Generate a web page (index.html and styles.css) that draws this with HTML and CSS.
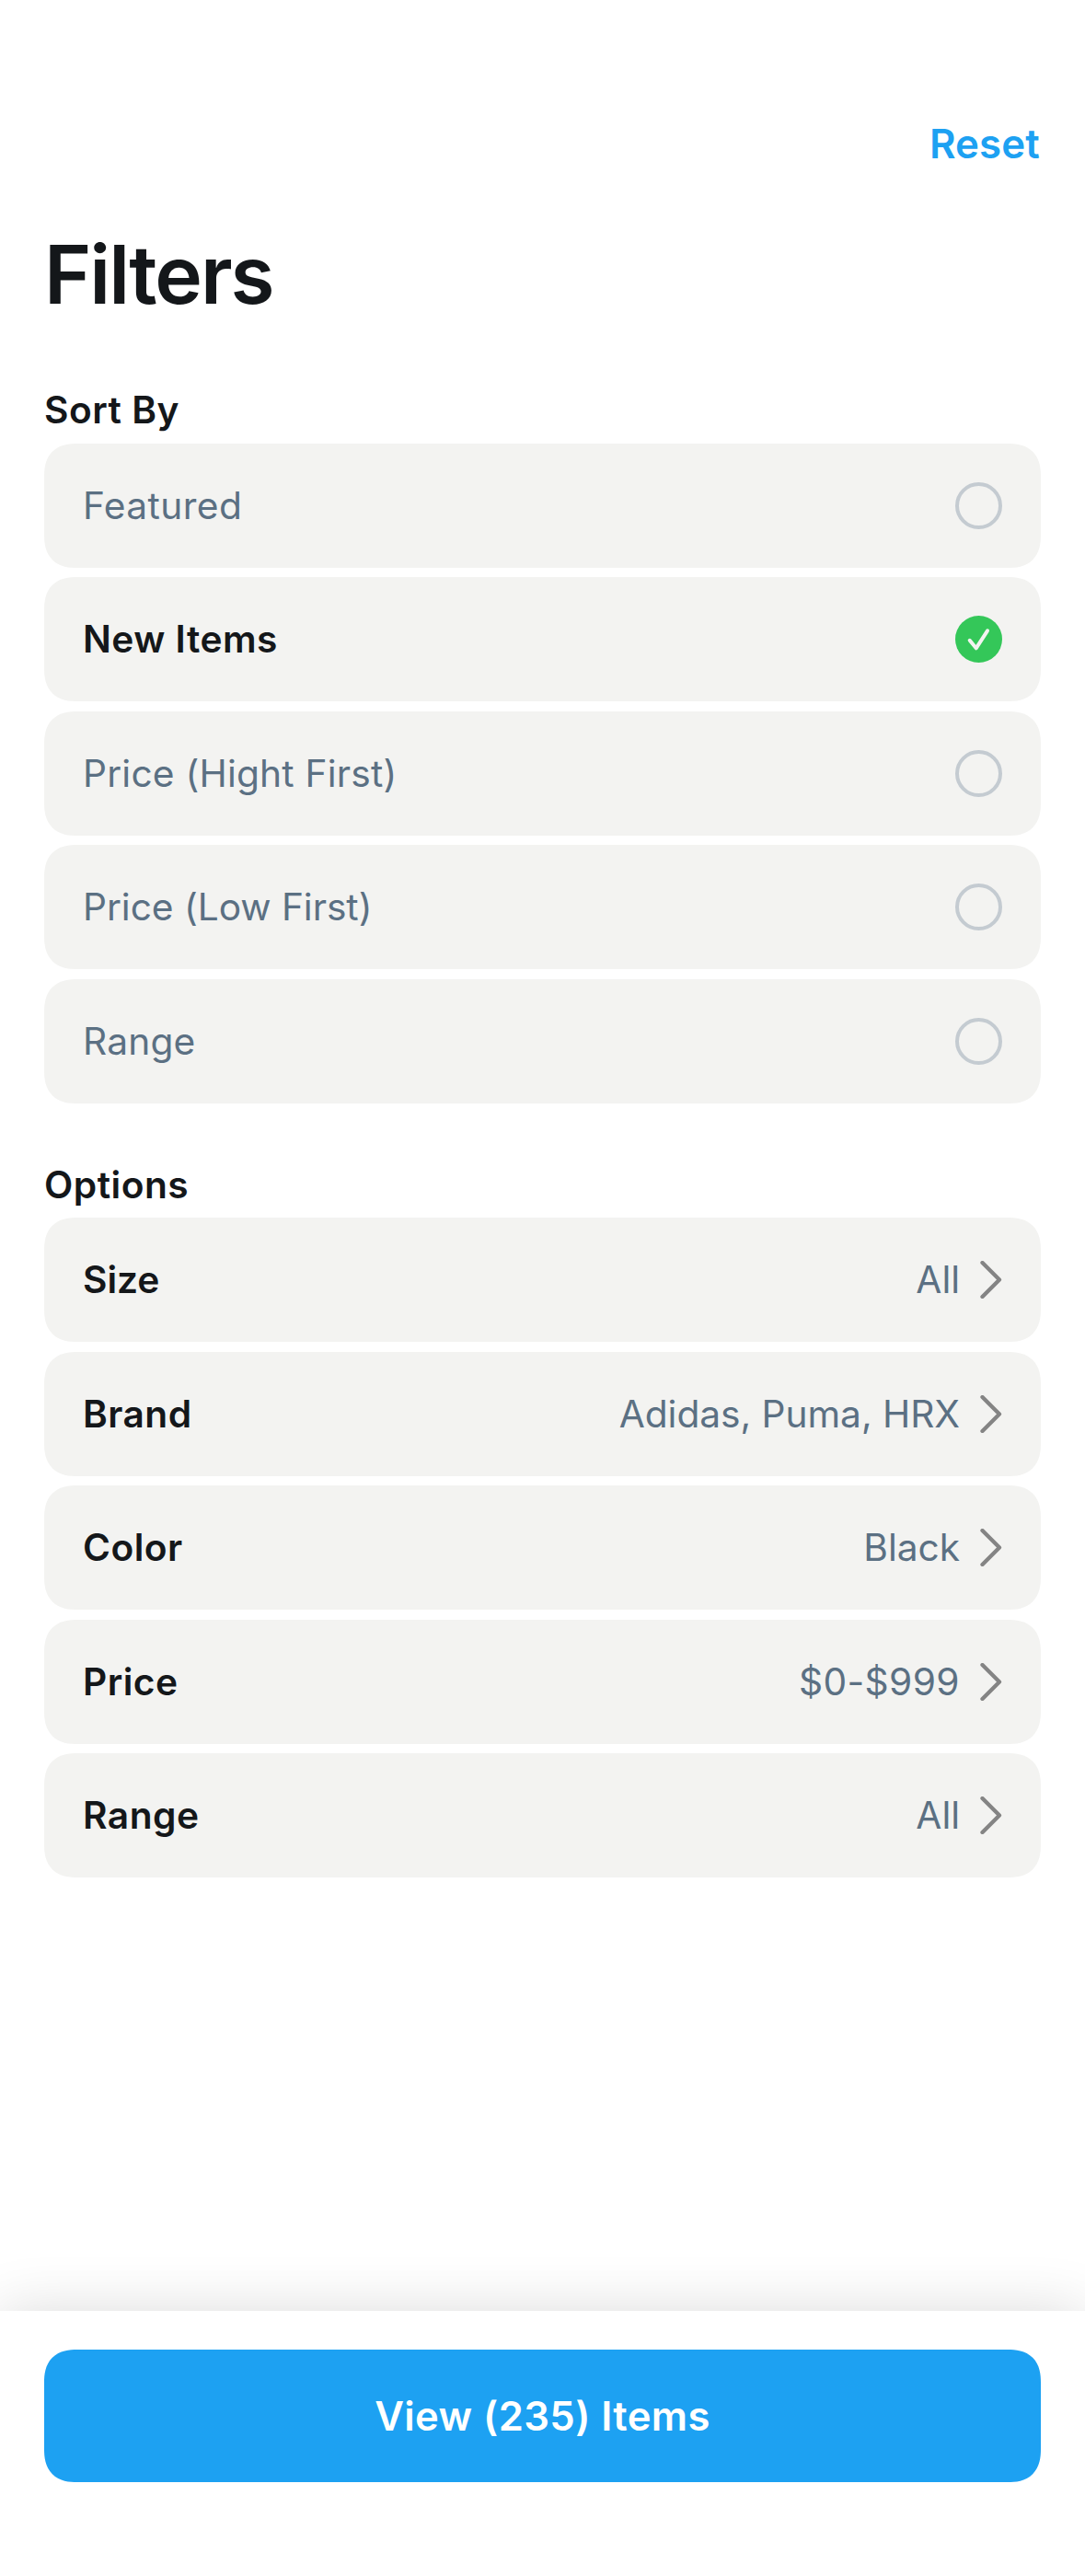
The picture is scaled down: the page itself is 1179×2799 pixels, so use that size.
FILE: index.html
```html
<!DOCTYPE html>
<html lang="en">
<head>
<meta charset="utf-8">
<title>Filters</title>
<link rel="stylesheet" href="styles.css">
</head>
<body>
<svg class="defs" width="0" height="0">
  <symbol id="check" viewBox="0 0 51 51"><circle cx="25.5" cy="25.5" r="25.5" fill="#34c759"/><path d="M15.700 26.800L22.700 35.300L35 16.300" fill="none" stroke="#f3f3f1" stroke-width="4" stroke-linecap="round" stroke-linejoin="round"/></symbol>
  <symbol id="chevron" viewBox="0 0 24 41"><path d="M2.500 2.100L21 20.500L2.500 38.900" fill="none" stroke="#848484" stroke-width="4.300" stroke-linecap="round" stroke-linejoin="round"/></symbol>
</svg>
<main class="screen">
  <header class="topbar"><a class="reset">Reset</a></header>
  <h1 class="title">Filters</h1>
  <section class="group sort">
    <h2 class="heading">Sort By</h2>
    <ul class="list">
      <li class="row"><span class="muted wide">Featured</span><i class="radio"></i></li>
      <li class="row"><span class="strong">New Items</span><svg class="check"><use href="#check"/></svg></li>
      <li class="row"><span class="muted">Price (Hight First)</span><i class="radio"></i></li>
      <li class="row"><span class="muted tight">Price (Low First)</span><i class="radio"></i></li>
      <li class="row"><span class="muted">Range</span><i class="radio"></i></li>
    </ul>
  </section>
  <section class="group options">
    <h2 class="heading">Options</h2>
    <ul class="list">
      <li class="row"><span class="strong tight">Size</span><span class="muted value tight">All</span><svg class="chevron"><use href="#chevron"/></svg></li>
      <li class="row"><span class="strong">Brand</span><span class="muted value tight">Adidas, Puma, HRX</span><svg class="chevron"><use href="#chevron"/></svg></li>
      <li class="row"><span class="strong">Color</span><span class="muted value tight">Black</span><svg class="chevron"><use href="#chevron"/></svg></li>
      <li class="row"><span class="strong">Price</span><span class="muted value wide">$0-$999</span><svg class="chevron"><use href="#chevron"/></svg></li>
      <li class="row"><span class="strong">Range</span><span class="muted value tight">All</span><svg class="chevron"><use href="#chevron"/></svg></li>
    </ul>
  </section>
  <footer class="footer"><button class="view">View (235) Items</button></footer>
</main>
</body>
</html>
```
FILE: styles.css
```css
* { box-sizing: border-box; margin: 0; padding: 0; }
body { background: #fff; color: #14171a; font-family: Inter, sans-serif; }
.defs { display: block; height: 0; }
.screen { height: 2799px; display: flex; flex-direction: column; overflow: hidden; }
.topbar { flex: none; height: 214px; padding: 130px 49px 0; text-align: right; }
.reset { display: block; font-size: 43.8px; line-height: 54px; font-weight: 600; letter-spacing: 0.15px; color: #1da1f2; }
.title { flex: none; height: 170px; padding-left: 48px; font-size: 87.4px; line-height: 168px; font-weight: 600; letter-spacing: -2.03px; }
.group { flex: none; padding: 0 48px; }
.sort { padding-top: 35.7px; }
.options { padding-top: 62.8px; }
.heading { height: 62.2px; line-height: 52px; font-size: 40.7px; font-weight: 600; letter-spacing: 0.5px; }
.options .heading { height: 61.4px; }
.list { list-style: none; display: flex; flex-direction: column; gap: 10.5px; }
.row { height: 135px; display: flex; align-items: center; padding: 0 42px; border-radius: 30px; background: #f3f3f1; font-size: 40.7px; }
.muted { color: #5b7083; font-weight: 400; letter-spacing: 0.2px; }
.strong { font-weight: 600; letter-spacing: 0.47px; }
.wide { letter-spacing: 0.4px; }
.tight { letter-spacing: -0.05px; }
.radio { width: 51px; height: 51px; margin-left: auto; border: 4px solid #c4cbd1; border-radius: 50%; }
.check { width: 51px; height: 51px; margin-left: auto; }
.value { margin-left: auto; }
.chevron { width: 24px; height: 41px; margin-left: 22px; }
.footer { flex: none; margin-top: auto; height: 288px; padding: 42px 48px 0; background: #fff; box-shadow: 0 0 60px rgba(0, 0, 0, 0.14); }
.view { display: block; width: 100%; height: 144px; border: 0; border-radius: 30px; background: #1da1f2; color: #fff; font: 600 43.6px Inter, sans-serif; letter-spacing: 0.4px; }

/* Continuous corner curve where the browser supports it */
@supports (corner-shape: superellipse(1.3)) {
  .row, .view { border-radius: 36px; corner-shape: superellipse(1.3); }
}
```
